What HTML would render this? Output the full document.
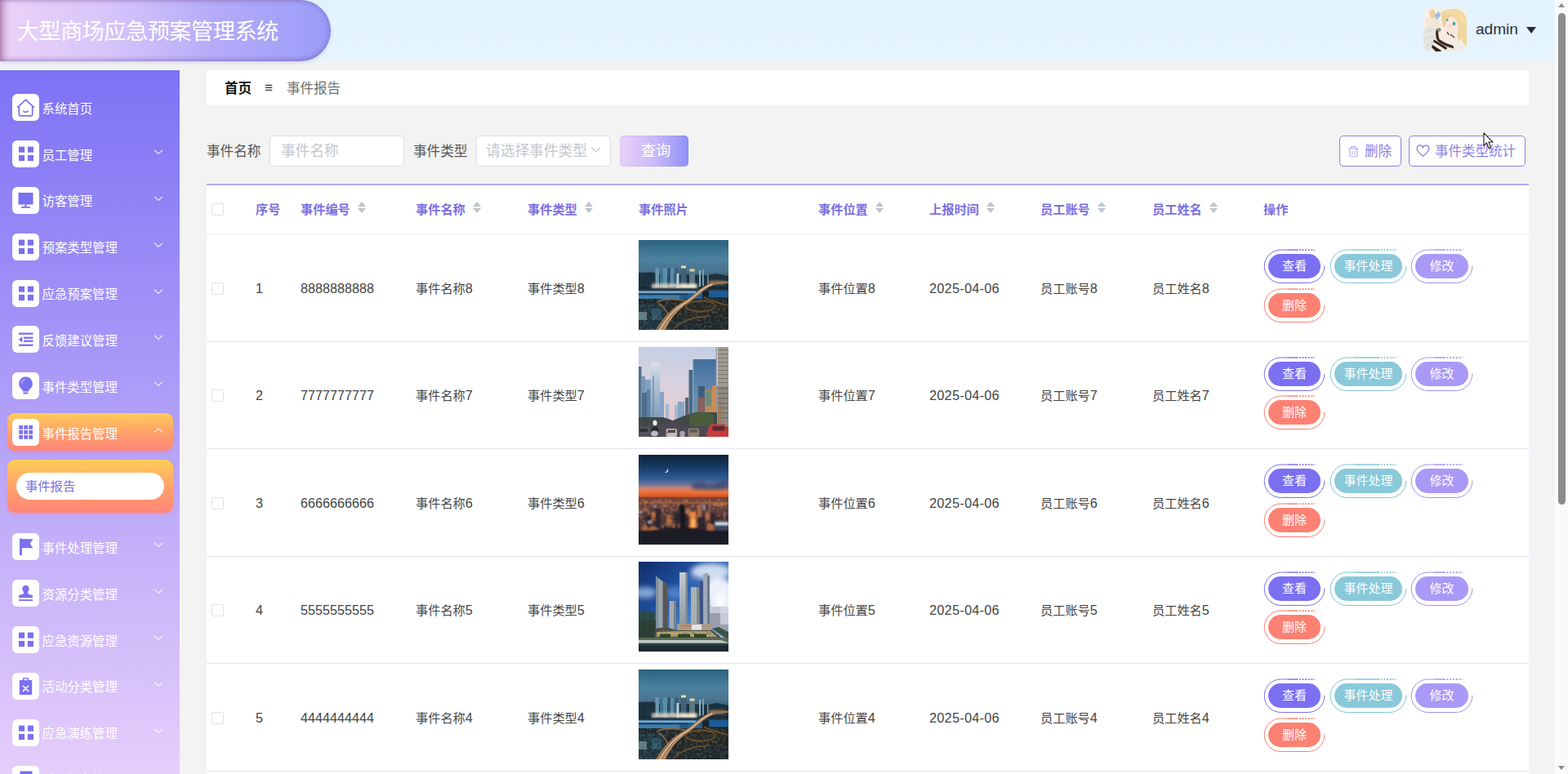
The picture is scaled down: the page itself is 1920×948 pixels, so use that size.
<!DOCTYPE html>
<html lang="zh-CN">
<head>
<meta charset="utf-8">
<title>大型商场应急预案管理系统</title>
<style>
*{box-sizing:border-box;margin:0;padding:0}
html,body{width:1920px;height:948px;overflow:hidden;background:#f3f3f3;font-family:"Liberation Sans","Noto Sans CJK SC",sans-serif;color:#333}
body{position:relative}
.abs{position:absolute}
/* header */
#hdr{position:absolute;left:0;top:0;width:1904px;height:80px;background:linear-gradient(180deg,#e3f3fe 0%,#e5f4fe 86%,#f3f3f3 100%)}
#logo{position:absolute;left:0;top:0;width:405px;height:75px;border-radius:0 40px 40px 0;background:linear-gradient(90deg,#ecd2f8 0%,#d6c5fa 33%,#b4aaf8 66%,#9a9cf8 100%);box-shadow:inset 7px 0 8px -3px rgba(120,60,110,.55),inset 0 -4px 6px -3px rgba(100,80,170,.4),inset 0 3px 5px -3px rgba(120,90,160,.35),inset -4px 0 8px -4px rgba(90,80,180,.4),0 2px 4px rgba(150,150,190,.3);color:#fff;font-size:27.2px;line-height:77px;padding-left:20.5px;white-space:nowrap;letter-spacing:-.5px}
#avatar{position:absolute;left:1743px;top:10px;width:53px;height:53px;border-radius:8px;overflow:hidden}
#uname{position:absolute;left:1807px;top:22px;font-size:19px;line-height:28px;color:#2b3340}
#ucaret{position:absolute;left:1868.5px;top:33px;width:0;height:0;border-left:6px solid transparent;border-right:6px solid transparent;border-top:8px solid #252b33}
/* scrollbar */
#sb{position:absolute;left:1904px;top:0;width:16px;height:948px;background:#fafafa}
#sb .th{position:absolute;left:4px;top:16px;width:9px;height:602px;border-radius:5px;background:#8b8b8d}
#sb .up{position:absolute;left:4px;top:4px;width:0;height:0;border-left:4.5px solid transparent;border-right:4.5px solid transparent;border-bottom:5px solid #8b8b8d}
#sb .dn{position:absolute;left:4px;top:938px;width:0;height:0;border-left:4.5px solid transparent;border-right:4.5px solid transparent;border-top:5px solid #8b8b8d}
/* sidebar */
#side{position:absolute;left:0;top:86px;width:220px;height:862px;background:linear-gradient(180deg,#7d72f5 0%,#e6cefb 100%);overflow:hidden}
.mi{position:absolute;left:0;width:220px;height:46px;color:#fff;font-size:15.4px;line-height:46px;white-space:nowrap}
.mi .ic{position:absolute;left:15px;top:7px;width:33px;height:33px;border-radius:6px;background:#fff}
.mi .ic svg{position:absolute;left:0;top:0;width:33px;height:33px}
.mi .tx{position:absolute;left:51.5px;top:2.5px}
.mi .ar{position:absolute;left:188px;top:15px;width:12px;height:12px}
.mi.act{left:9px;width:203px;border-radius:9px;background:linear-gradient(180deg,#ffcd5a 0%,#ff9f6b 55%,#ff8578 100%);box-shadow:0 2px 5px rgba(255,120,110,.3)}
.mi.act .ic{left:6px}
.mi.act .tx{left:42.5px}
.mi.act .ar{left:179px}
#sub{position:absolute;left:9px;top:477px;width:203px;height:65px;border-radius:9px;background:linear-gradient(180deg,#ffcd5a 0%,#ff9f6b 55%,#ff8578 100%);box-shadow:0 2px 5px rgba(255,120,110,.3)}
#sub .pill{position:absolute;left:11px;top:16px;width:181px;height:33px;border-radius:17px;background:#fff;color:#7a70de;font-size:15.3px;line-height:33px;padding-left:11px}
/* main */
#crumb{position:absolute;left:253px;top:86px;width:1619px;height:43px;background:#fff;font-size:16.5px;line-height:45px}
#crumb b{position:absolute;left:22px;color:#111;font-weight:bold}
#crumb i{position:absolute;left:71px;top:-1px;font-style:normal;color:#333;font-size:17px}
#crumb span{position:absolute;left:98px;color:#707070}
.lbl{position:absolute;top:166px;height:38px;line-height:40px;font-size:16.6px;color:#555}
.inp{position:absolute;top:166px;height:38px;width:165px;border:1px solid #dcdfe6;border-radius:5px;background:#fff;color:#c3c6cd;font-size:17.7px;line-height:37px;white-space:nowrap;overflow:hidden}
#qbtn{position:absolute;left:759px;top:166px;width:84px;height:38px;border-radius:5px;background:linear-gradient(90deg,#e9d1f8 0%,#c9b9fa 50%,#8f91f7 100%);box-shadow:inset 0 0 2px rgba(130,110,200,.3);color:#fff;font-size:18.3px;line-height:38px;text-align:center;padding-left:4px}
.obtn{position:absolute;top:166px;height:38px;border:1px solid #8a81e0;border-radius:5px;background:#fff;color:#8b83e6;font-size:16.5px;line-height:36px;white-space:nowrap}
/* table */
#tbl{position:absolute;left:253px;top:225px;width:1619px;height:723px;background:#fff;border-top:2px solid #b5a9ee;overflow:hidden}
.hr{position:absolute;left:0;top:0;width:1619px;height:60px;border-bottom:1px solid #ebeef5}
.th{position:absolute;top:0;height:59px;line-height:59px;font-size:15.2px;font-weight:bold;color:#7b6fe0;white-space:nowrap}
.srt{display:inline-block;position:relative;width:10px;height:16px;margin-left:9px;vertical-align:middle;top:-3.5px}
.srt:before{content:"";position:absolute;left:0;top:1px;border-left:5px solid transparent;border-right:5px solid transparent;border-bottom:6px solid #c0c4cc}
.srt:after{content:"";position:absolute;left:0;top:9px;border-left:5px solid transparent;border-right:5px solid transparent;border-top:6px solid #c0c4cc}
.row{position:absolute;left:0;width:1619px;height:132px;border-bottom:1px solid #e4e2f3}
.td{position:absolute;top:0;height:131px;line-height:133px;font-size:15.2px;color:#444;white-space:nowrap}
.cb{position:absolute;left:6px;width:15px;height:15px;border:1px solid #dfe2e9;border-radius:2px;background:#fff}
.d{font-size:16.2px}
.num{letter-spacing:0}
.date{letter-spacing:.3px}
.pic{position:absolute;left:529px;top:7px;width:110px;height:110px;overflow:hidden}
.pic svg{display:block;width:110px;height:110px}
.b{position:absolute;height:30px;border-radius:15px;color:#fff;font-size:15px;line-height:30px;text-align:center}
.b span{position:relative}
.b svg{position:absolute;left:-7px;top:-10px;overflow:visible}
</style>
</head>
<body>
<div id="hdr"></div>
<div id="logo">大型商场应急预案管理系统</div>
<div id="avatar"><svg viewBox="0 0 53 53" width="53" height="53"><defs><filter id="bla" x="-10%" y="-10%" width="120%" height="120%"><feGaussianBlur stdDeviation=".7"/></filter></defs>
<rect width="53" height="53" fill="#f5f0e8"/>
<g filter="url(#bla)">
<path d="M7 3 Q11 0 14 3 L15 11 Q11 14 8 11Z" fill="#ecd2a4"/>
<path d="M14 8 L19 4 L21 9 L16 15Z" fill="#9dbfe8"/>
<path d="M2 14 Q10 10 20 16 L22 24 Q12 22 4 24Z" fill="#f3e6d6"/>
<path d="M21 6 Q30 -1 44 2 Q53 6 53 20 V46 Q48 44 46 36 Q48 22 40 12 Q30 8 24 18Z" fill="#efd69c"/>
<path d="M27 3 Q38 0 47 5 Q52 12 52 26 Q46 12 36 9 Q30 8 27 12Z" fill="#f3dca6"/>
<path d="M24 16 Q26 10 34 10 Q43 12 44 24 Q43 32 36 34 Q28 33 25 27Z" fill="#fbe7de"/>
<path d="M22 14 Q26 6 36 8 Q31 10 28 17 Q27 22 25 24Z" fill="#edd296"/>
<path d="M38 10 Q45 14 46 28 Q47 36 44 42 L41 34 Q44 26 42 18Z" fill="#efd49a"/>
<ellipse cx="37.5" cy="19" rx="1.7" ry="2.3" fill="#35a696"/><ellipse cx="29" cy="14.5" rx="1.3" ry="1.8" fill="#5aa8c0"/>
<ellipse cx="33" cy="22" rx="3" ry="2" fill="#f9cfd0" opacity=".7"/>
<path d="M0 26 Q6 20 14 24 L16 40 L8 53 H0Z" fill="#e7e5e1"/>
<path d="M2 30 L12 26 M3 38 L13 34 M4 46 L12 42" stroke="#d2d0cc" stroke-width="1"/>
<path d="M17 30 Q28 26 40 34 L46 44 L44 53 H14 L16 40Z" fill="#f6ebe2"/>
<path d="M15.5 26 Q14 34 17 40 Q24 47 40 50 L43 47.5 Q28 44.5 19.5 38 Q17.5 32 18.5 27Z" fill="#3f2c22"/>
<path d="M16 25 Q20 23 22 26 L20 29 Q18 27 16 28Z" fill="#8a8478"/>
<path d="M11 45 L22 52 L21 53 H15 L10 48Z M13 38.5 L29 48.5 L27.5 51 L12 41Z" fill="#2c2220"/>
<path d="M29 29 L31 33 M33 32 L38 36" stroke="#4a3426" stroke-width="1.2"/>
<path d="M36 44 Q44 40 50 44 L53 53 H38Z" fill="#f1ece8"/>
<path d="M44 30 Q50 36 53 46 V28Z" fill="#efd8a0"/>
</g></svg></div>
<div id="uname">admin</div>
<div id="ucaret"></div>
<div id="side">
<div class="mi" style="top:22.2px"><div class="ic"><svg viewBox="0 0 33 33"><path d="M6.5 16.3 L16.5 7.2 L26.5 16.3 M8.3 14.8 V25.3 Q8.3 26.8 9.8 26.8 H23.2 Q24.7 26.8 24.7 25.3 V14.8" fill="none" stroke="#7b70f0" stroke-width="1.7" stroke-linejoin="round" stroke-linecap="round"/><path d="M13.6 21.2 Q16.5 23.6 19.4 21.2" fill="none" stroke="#7b70f0" stroke-width="1.5" stroke-linecap="round"/></svg></div><div class="tx">系统首页</div></div>
<div class="mi" style="top:79.1px"><div class="ic"><svg viewBox="0 0 33 33"><g fill="#7b70f0"><rect x="8" y="7.6" width="7.1" height="7.1"/><rect x="18.9" y="7.6" width="7.1" height="7.1"/><rect x="8" y="18" width="7.1" height="7.1"/><rect x="18.9" y="18" width="7.1" height="7.1"/></g></svg></div><div class="tx">员工管理</div><svg class="ar" viewBox="0 0 12 12"><path d="M1 3.8 L6 8.5 L11 3.8" fill="none" stroke="#fff" stroke-opacity=".8" stroke-width="1.2"/></svg></div>
<div class="mi" style="top:135.9px"><div class="ic"><svg viewBox="0 0 33 33"><g fill="#7b70f0"><rect x="7.5" y="7" width="18" height="14.5"/><rect x="15.3" y="21.5" width="2.4" height="3"/><rect x="11" y="24" width="11" height="1.8"/></g></svg></div><div class="tx">访客管理</div><svg class="ar" viewBox="0 0 12 12"><path d="M1 3.8 L6 8.5 L11 3.8" fill="none" stroke="#fff" stroke-opacity=".8" stroke-width="1.2"/></svg></div>
<div class="mi" style="top:192.8px"><div class="ic"><svg viewBox="0 0 33 33"><g fill="#7b70f0"><rect x="8" y="7.6" width="7.1" height="7.1"/><rect x="18.9" y="7.6" width="7.1" height="7.1"/><rect x="8" y="18" width="7.1" height="7.1"/><rect x="18.9" y="18" width="7.1" height="7.1"/></g></svg></div><div class="tx">预案类型管理</div><svg class="ar" viewBox="0 0 12 12"><path d="M1 3.8 L6 8.5 L11 3.8" fill="none" stroke="#fff" stroke-opacity=".8" stroke-width="1.2"/></svg></div>
<div class="mi" style="top:249.6px"><div class="ic"><svg viewBox="0 0 33 33"><g fill="#7b70f0"><rect x="8" y="7.6" width="7.1" height="7.1"/><rect x="18.9" y="7.6" width="7.1" height="7.1"/><rect x="8" y="18" width="7.1" height="7.1"/><rect x="18.9" y="18" width="7.1" height="7.1"/></g></svg></div><div class="tx">应急预案管理</div><svg class="ar" viewBox="0 0 12 12"><path d="M1 3.8 L6 8.5 L11 3.8" fill="none" stroke="#fff" stroke-opacity=".8" stroke-width="1.2"/></svg></div>
<div class="mi" style="top:306.4px"><div class="ic"><svg viewBox="0 0 33 33"><g fill="#7b70f0"><rect x="8" y="8.5" width="17.5" height="2.3"/><rect x="14" y="13.6" width="11.5" height="2.3"/><rect x="14" y="17.6" width="11.5" height="2.3"/><rect x="8" y="22.6" width="17.5" height="2.3"/><path d="M12.3 13.2 V20.4 L7.8 16.8 Z"/></g></svg></div><div class="tx">反馈建议管理</div><svg class="ar" viewBox="0 0 12 12"><path d="M1 3.8 L6 8.5 L11 3.8" fill="none" stroke="#fff" stroke-opacity=".8" stroke-width="1.2"/></svg></div>
<div class="mi" style="top:363.3px"><div class="ic"><svg viewBox="0 0 33 33"><g fill="#7b70f0"><path d="M16.5 5.5 a8.3 8.3 0 0 1 5 14.9 q-1.3 1 -1.5 3.1 h-7 q-.2 -2.1 -1.5 -3.1 a8.3 8.3 0 0 1 5 -14.9z"/><rect x="13.3" y="24.6" width="6.4" height="1.9" rx=".9"/></g><path d="M11.8 13.5 a5 5 0 0 1 3.6 -4.6" fill="none" stroke="#b9b2fa" stroke-width="1.3" stroke-linecap="round"/></svg></div><div class="tx">事件类型管理</div><svg class="ar" viewBox="0 0 12 12"><path d="M1 3.8 L6 8.5 L11 3.8" fill="none" stroke="#fff" stroke-opacity=".8" stroke-width="1.2"/></svg></div>
<div class="mi act" style="top:420.1px"><div class="ic"><svg viewBox="0 0 33 33"><g fill="#7b70f0"><rect x="8.2" y="8" width="4.8" height="4.8"/><rect x="14.2" y="8" width="4.8" height="4.8"/><rect x="20.2" y="8" width="4.8" height="4.8"/><rect x="8.2" y="14" width="4.8" height="4.8"/><rect x="14.2" y="14" width="4.8" height="4.8"/><rect x="20.2" y="14" width="4.8" height="4.8"/><rect x="8.2" y="20" width="4.8" height="4.8"/><rect x="14.2" y="20" width="4.8" height="4.8"/><rect x="20.2" y="20" width="4.8" height="4.8"/></g></svg></div><div class="tx">事件报告管理</div><svg class="ar" viewBox="0 0 12 12"><path d="M1 8.5 L6 3.8 L11 8.5" fill="none" stroke="#fff" stroke-opacity=".8" stroke-width="1.2"/></svg></div>
<div class="mi" style="top:560.3px"><div class="ic"><svg viewBox="0 0 33 33"><g fill="#7b70f0"><rect x="9" y="6.5" width="3" height="20.5" rx=".6"/><path d="M12 7.2 H25.5 L21.6 12.7 L25.5 18.3 H12 Z"/></g></svg></div><div class="tx">事件处理管理</div><svg class="ar" viewBox="0 0 12 12"><path d="M1 3.8 L6 8.5 L11 3.8" fill="none" stroke="#fff" stroke-opacity=".8" stroke-width="1.2"/></svg></div>
<div class="mi" style="top:617.1px"><div class="ic"><svg viewBox="0 0 33 33"><g fill="#7b70f0"><path d="M16.5 6.8 a4.3 4.3 0 0 1 3 7.4 q-.9 1 -.3 2.6 q.5 1.4 2.6 1.6 h1.6 q1.6 0 1.6 1.6 v2.2 h-17 v-2.2 q0 -1.6 1.6 -1.6 h1.6 q2.1 -.2 2.6 -1.6 q.6 -1.6 -.3 -2.6 a4.3 4.3 0 0 1 3 -7.4z"/><rect x="8" y="24.2" width="17" height="1.8"/></g></svg></div><div class="tx">资源分类管理</div><svg class="ar" viewBox="0 0 12 12"><path d="M1 3.8 L6 8.5 L11 3.8" fill="none" stroke="#fff" stroke-opacity=".8" stroke-width="1.2"/></svg></div>
<div class="mi" style="top:674px"><div class="ic"><svg viewBox="0 0 33 33"><g fill="#7b70f0"><rect x="8" y="7.6" width="7.1" height="7.1"/><rect x="18.9" y="7.6" width="7.1" height="7.1"/><rect x="8" y="18" width="7.1" height="7.1"/><rect x="18.9" y="18" width="7.1" height="7.1"/></g></svg></div><div class="tx">应急资源管理</div><svg class="ar" viewBox="0 0 12 12"><path d="M1 3.8 L6 8.5 L11 3.8" fill="none" stroke="#fff" stroke-opacity=".8" stroke-width="1.2"/></svg></div>
<div class="mi" style="top:730.8px"><div class="ic"><svg viewBox="0 0 33 33"><g fill="#7b70f0"><rect x="8.8" y="9" width="15.4" height="18" rx="1"/><rect x="12.8" y="6.2" width="7.4" height="4.5" rx=".8"/></g><rect x="14.3" y="7.6" width="4.4" height="1.6" fill="#fff"/><path d="M13.4 16.2 L19.6 22.4 M19.6 16.2 L13.4 22.4" stroke="#fff" stroke-width="1.6" stroke-linecap="round"/></svg></div><div class="tx">活动分类管理</div><svg class="ar" viewBox="0 0 12 12"><path d="M1 3.8 L6 8.5 L11 3.8" fill="none" stroke="#fff" stroke-opacity=".8" stroke-width="1.2"/></svg></div>
<div class="mi" style="top:787.7px"><div class="ic"><svg viewBox="0 0 33 33"><g fill="#7b70f0"><rect x="8" y="7.6" width="7.1" height="7.1"/><rect x="18.9" y="7.6" width="7.1" height="7.1"/><rect x="8" y="18" width="7.1" height="7.1"/><rect x="18.9" y="18" width="7.1" height="7.1"/></g></svg></div><div class="tx">应急演练管理</div><svg class="ar" viewBox="0 0 12 12"><path d="M1 3.8 L6 8.5 L11 3.8" fill="none" stroke="#fff" stroke-opacity=".8" stroke-width="1.2"/></svg></div>
<div class="mi" style="top:844.5px"><div class="ic"><svg viewBox="0 0 33 33"><g fill="#7b70f0"><rect x="9.5" y="6.6" width="15" height="20" rx="1"/></g><path d="M12.5 12 H21.5 M12.5 16 H21.5 M12.5 20 H18" stroke="#fff" stroke-width="1.5"/></svg></div><div class="tx">活动报名管理</div><svg class="ar" viewBox="0 0 12 12"><path d="M1 3.8 L6 8.5 L11 3.8" fill="none" stroke="#fff" stroke-opacity=".8" stroke-width="1.2"/></svg></div>
<div id="sub"><div class="pill">事件报告</div></div>
</div>
<div id="crumb"><b>首页</b><i>≡</i><span>事件报告</span></div>
<div class="lbl" style="left:253px">事件名称</div>
<div class="inp" style="left:330px;padding-left:13px">事件名称</div>
<div class="lbl" style="left:506px">事件类型</div>
<div class="inp" style="left:583px;padding-left:11px">请选择事件类型<svg style="position:absolute;left:139px;top:10px" width="13" height="13" viewBox="0 0 13 13"><path d="M1.5 4 L6.5 9 L11.5 4" fill="none" stroke="#c0c4cc" stroke-width="1.2"/></svg></div>
<div id="qbtn">查询</div>
<div class="obtn" style="left:1640px;width:76px"><svg style="position:absolute;left:9px;top:11px" width="14.5" height="15.4" viewBox="0 0 16 17"><g fill="none" stroke="#b5aef2" stroke-width="1.3"><path d="M1.5 4.5 H14.5 M5 4.5 V2.5 Q5 1.8 5.7 1.8 H10.3 Q11 1.8 11 2.5 V4.5 M3 4.5 V14 Q3 15.2 4.2 15.2 H11.8 Q13 15.2 13 14 V4.5 M6.3 7.5 V12.5 M9.7 7.5 V12.5"/></g></svg><span style="position:absolute;left:30px">删除</span></div>
<div class="obtn" style="left:1725px;width:143px"><svg style="position:absolute;left:8px;top:10px" width="17" height="16" viewBox="0 0 17 16"><path d="M8.5 14.3 C4 10.8 1.2 8.3 1.2 5.3 A3.6 3.6 0 0 1 8.5 4 A3.6 3.6 0 0 1 15.8 5.3 C15.8 8.3 13 10.8 8.5 14.3Z" fill="none" stroke="#8b83e6" stroke-width="1.3" stroke-linejoin="round"/></svg><span style="position:absolute;left:31px">事件类型统计</span></div>
<div id="tbl">
<div class="hr"><div class="cb" style="top:22px"></div><div class="th" style="left:60px">序号</div><div class="th" style="left:115px">事件编号<span class="srt"></span></div><div class="th" style="left:256px">事件名称<span class="srt"></span></div><div class="th" style="left:393px">事件类型<span class="srt"></span></div><div class="th" style="left:529px">事件照片</div><div class="th" style="left:749px">事件位置<span class="srt"></span></div><div class="th" style="left:885px">上报时间<span class="srt"></span></div><div class="th" style="left:1021px">员工账号<span class="srt"></span></div><div class="th" style="left:1158px">员工姓名<span class="srt"></span></div><div class="th" style="left:1294px">操作</div></div>
<div class="row" style="top:59.5px"><div class="cb" style="top:59px"></div><div class="td" style="left:60px"><span class="d">1</span></div><div class="td num" style="left:115px"><span class="d">8888888888</span></div><div class="td" style="left:256px">事件名称<span class="d">8</span></div><div class="td" style="left:393px">事件类型<span class="d">8</span></div><div class="td" style="left:749px">事件位置<span class="d">8</span></div><div class="td date" style="left:885px"><span class="d">2025-04-06</span></div><div class="td" style="left:1021px">员工账号<span class="d">8</span></div><div class="td" style="left:1158px">员工姓名<span class="d">8</span></div><div class="pic"><svg viewBox="0 0 110 110" preserveAspectRatio="none"><defs>
<linearGradient id="p1s" x1="0" y1="0" x2="0" y2="1"><stop offset="0" stop-color="#2b627f"/><stop offset=".5" stop-color="#4c829f"/><stop offset=".8" stop-color="#4a7490"/><stop offset="1" stop-color="#3b6079"/></linearGradient>
<linearGradient id="p1h" x1="0" y1="1" x2="1" y2="0"><stop offset="0" stop-color="#caa27a"/><stop offset=".5" stop-color="#b98a60"/><stop offset="1" stop-color="#e2a868"/></linearGradient>
<filter id="bl1" x="-10%" y="-10%" width="120%" height="120%"><feGaussianBlur stdDeviation=".7"/></filter><filter id="bl2" x="-20%" y="-20%" width="140%" height="140%"><feGaussianBlur stdDeviation="1.8"/></filter>
<filter id="nz1" x="0" y="0" width="100%" height="100%"><feTurbulence type="fractalNoise" baseFrequency=".3 .4" numOctaves="2" seed="7"/><feColorMatrix type="matrix" values="0 0 0 0 .62  0 0 0 0 .45  0 0 0 0 .28  2.4 0 0 0 -1.15"/></filter><filter id="nz1b" x="0" y="0" width="100%" height="100%"><feTurbulence type="fractalNoise" baseFrequency=".18 .25" numOctaves="2" seed="21"/><feColorMatrix type="matrix" values="0 0 0 0 .2  0 0 0 0 .38  0 0 0 0 .48  0 2.4 0 0 -1.2"/></filter></defs>
<rect width="110" height="110" fill="#18232a"/>
<rect width="110" height="46" fill="url(#p1s)"/>
<g filter="url(#bl1)">
<path d="M0 40 L18 39.5 L22 42 L60 42 L84 43 L96 41 L110 44 V58 H0Z" fill="#1c3340"/>
<rect x="20.5" y="34" width="4.5" height="24" fill="#6a96ae"/><rect x="26" y="39" width="3.5" height="19" fill="#3f6f8c"/><rect x="29.5" y="34.5" width="5.5" height="24" fill="#5890ac"/><rect x="35.5" y="34.5" width="3.5" height="23" fill="#2f556e"/><rect x="39" y="35" width="4.5" height="22" fill="#5b8aa4"/><rect x="44" y="34.5" width="5" height="23" fill="#3a5f7a"/><rect x="46.5" y="41" width="3" height="18" fill="#b4cedb"/><rect x="51.5" y="32" width="7" height="26" fill="#3f6278"/><rect x="52" y="31.5" width="6" height="3" fill="#ecd9a8"/><rect x="62" y="36" width="7" height="22" fill="#5a7886"/><rect x="62.5" y="35.5" width="6" height="3" fill="#e6d09a"/><rect x="74" y="37" width="2" height="20" fill="#8fb0c2"/><rect x="78" y="36" width="1.8" height="20" fill="#7fa2b6"/><rect x="84" y="42" width="1.5" height="12" fill="#6f93a8"/>
</g>
<g filter="url(#bl2)"><rect x="16" y="53.5" width="56" height="6" fill="#e9dcc8" opacity=".8"/><rect x="50" y="54" width="20" height="5" fill="#fff0d0" opacity=".9"/><rect x="86" y="50" width="20" height="4" fill="#d89858" opacity=".7"/></g>
<g filter="url(#bl1)">
<rect x="0" y="59.5" width="110" height="3" fill="#223846"/>
<rect x="0" y="62" width="78" height="10" fill="#215f8d"/><rect x="0" y="62.5" width="70" height="2.6" fill="#7aa6c8"/><rect x="0" y="65.5" width="60" height="1.8" fill="#1c3a52"/><rect x="0" y="67.5" width="50" height="4.5" fill="#3a7eae"/>
<rect x="86" y="62" width="24" height="8.5" fill="#1c5b96"/>
<rect x="0" y="72" width="110" height="38" fill="#1b252a"/>
<rect x="38" y="72" width="72" height="24" fill="#25251f" opacity=".8"/>
<rect x="0" y="78" width="30" height="32" fill="#1d3642" opacity=".8"/>
<rect x="0" y="88" width="10" height="10" fill="#6d8894" opacity=".8"/><rect x="16" y="84" width="12" height="14" fill="#2c5468" opacity=".8"/>
</g>
<rect x="0" y="72" width="110" height="38" filter="url(#nz1)" opacity=".3"/>
<rect x="0" y="72" width="110" height="38" filter="url(#nz1b)" opacity=".25"/>
<g filter="url(#bl1)" fill="none" stroke-linecap="round">
<ellipse cx="76" cy="81" rx="18" ry="6.5" stroke="#6e4e2c" stroke-width="1.8"/>
<path d="M23 76 C27 71 50 72 60 75 M25 78 C33 84 38 90 35 100" stroke="#8a6238" stroke-width="1.8"/>
<path d="M42 110 C52 98 66 95 86 93 M80 70 C88 74 98 78 110 80" stroke="#6d5230" stroke-width="1.5"/>
<path d="M21 110 C32 92 42 82 56 75 C68 68 74 58 88 53 C96 51 104 51 110 50.5 V53 C104 53 98 53.5 91 55.5 C78 61 72 70 60 77.5 C47 85 40 95 33 110Z" fill="#9c7452" stroke="none"/>
<path d="M26 110 C36 93 44 84 58 76.5 C70 69 76 59 90 54" stroke="#e6c9a4" stroke-width="1.5" opacity=".9"/>
<path d="M30 110 C38 96 45 88 54 81" stroke="#c89c70" stroke-width="1.5"/>
</g></svg></div><div class="b" style="left:1300px;top:24.5px;width:64px;background:#7b6ff2"><svg width="64" height="30" viewBox="0 0 64 30" style="position:absolute;left:0;top:0;overflow:visible"><path d="M68.8 14.75 A20.25 20.25 0 0 1 48.55 35.5 H15.45 A20.25 20.25 0 0 1 15.45 -5 H34" fill="none" stroke="#7a6fe6" stroke-width="1"/><path d="M23.45 -4.9 H34" stroke="#7a6fe6" stroke-width="1.4" fill="none" opacity=".6"/><path d="M34 -4.8 H57" stroke="#7a6fe6" stroke-width="1.7" stroke-dasharray="1.9 1.8" fill="none"/></svg><span>查看</span></div><div class="b" style="left:1381px;top:24.5px;width:83px;background:#89c9da"><svg width="83" height="30" viewBox="0 0 83 30" style="position:absolute;left:0;top:0;overflow:visible"><path d="M87.8 14.75 A20.25 20.25 0 0 1 67.55 35.5 H15.45 A20.25 20.25 0 0 1 15.45 -5 H53" fill="none" stroke="#7fc4d4" stroke-width="1"/><path d="M23.45 -4.9 H53" stroke="#7fc4d4" stroke-width="1.4" fill="none" opacity=".6"/><path d="M53 -4.8 H76" stroke="#7fc4d4" stroke-width="1.7" stroke-dasharray="1.9 1.8" fill="none"/></svg><span>事件处理</span></div><div class="b" style="left:1480px;top:24.5px;width:65px;background:#aa99f6"><svg width="65" height="30" viewBox="0 0 65 30" style="position:absolute;left:0;top:0;overflow:visible"><path d="M69.8 14.75 A20.25 20.25 0 0 1 49.55 35.5 H15.45 A20.25 20.25 0 0 1 15.45 -5 H35" fill="none" stroke="#a293ee" stroke-width="1"/><path d="M23.45 -4.9 H35" stroke="#a293ee" stroke-width="1.4" fill="none" opacity=".6"/><path d="M35 -4.8 H58" stroke="#a293ee" stroke-width="1.7" stroke-dasharray="1.9 1.8" fill="none"/></svg><span>修改</span></div><div class="b" style="left:1300px;top:72px;width:64px;background:#fc8172"><svg width="64" height="30" viewBox="0 0 64 30" style="position:absolute;left:0;top:0;overflow:visible"><path d="M68.8 14.75 A20.25 20.25 0 0 1 48.55 35.5 H15.45 A20.25 20.25 0 0 1 15.45 -5 H34" fill="none" stroke="#f5806f" stroke-width="1"/><path d="M23.45 -4.9 H34" stroke="#f5806f" stroke-width="1.4" fill="none" opacity=".6"/><path d="M34 -4.8 H57" stroke="#f5806f" stroke-width="1.7" stroke-dasharray="1.9 1.8" fill="none"/></svg><span>删除</span></div></div>
<div class="row" style="top:191px"><div class="cb" style="top:59px"></div><div class="td" style="left:60px"><span class="d">2</span></div><div class="td num" style="left:115px"><span class="d">7777777777</span></div><div class="td" style="left:256px">事件名称<span class="d">7</span></div><div class="td" style="left:393px">事件类型<span class="d">7</span></div><div class="td" style="left:749px">事件位置<span class="d">7</span></div><div class="td date" style="left:885px"><span class="d">2025-04-06</span></div><div class="td" style="left:1021px">员工账号<span class="d">7</span></div><div class="td" style="left:1158px">员工姓名<span class="d">7</span></div><div class="pic"><svg viewBox="0 0 110 110" preserveAspectRatio="none"><defs>
<linearGradient id="p2s" x1="0" y1="0" x2="0" y2="1"><stop offset="0" stop-color="#c2cfe3"/><stop offset=".4" stop-color="#d9d2e0"/><stop offset=".8" stop-color="#e6cace"/><stop offset="1" stop-color="#d8b8b8"/></linearGradient>
<linearGradient id="p2b" x1="0" y1="0" x2="0" y2="1"><stop offset="0" stop-color="#436f9f"/><stop offset=".6" stop-color="#6a8fb0"/><stop offset="1" stop-color="#6f8a8c"/></linearGradient>
<linearGradient id="p2t" x1="0" y1="0" x2="0" y2="1"><stop offset="0" stop-color="#d9dfe8"/><stop offset=".3" stop-color="#b6c6d8"/><stop offset="1" stop-color="#7f9cba"/></linearGradient>
<filter id="bl3" x="-10%" y="-10%" width="120%" height="120%"><feGaussianBlur stdDeviation=".6"/></filter></defs>
<rect width="110" height="110" fill="url(#p2s)"/>
<g filter="url(#bl3)">
<rect x="0" y="24" width="3.5" height="70" fill="#56728f"/><rect x="3" y="36" width="5" height="58" fill="#7796b6"/><rect x="8" y="40" width="7" height="54" fill="#7fa0c2"/><rect x="4" y="56" width="6" height="38" fill="#4d6c8c"/><rect x="10" y="52" width="6" height="42" fill="#5e80a4"/>
<rect x="14.5" y="19" width="11.5" height="70" fill="url(#p2t)"/><rect x="17" y="35" width="2" height="52" fill="#6c8cae" opacity=".7"/>
<rect x="26" y="55" width="5" height="36" fill="#86a3c4"/><rect x="33" y="70" width="4" height="20" fill="#a3b7cf"/><rect x="44" y="71" width="5" height="18" fill="#a5bad0"/><rect x="48" y="67" width="8" height="22" fill="#86a6c4"/>
<rect x="57" y="62" width="4" height="34" fill="#566878"/><rect x="61.5" y="28" width="4.5" height="66" fill="#496987"/>
<rect x="66" y="15" width="29" height="82" fill="url(#p2b)"/><rect x="66" y="15" width="1.2" height="82" fill="#89a9c6"/>
<rect x="73" y="48" width="8" height="32" fill="#3c5c7e"/><rect x="72.5" y="62" width="8" height="20" fill="#8a6060"/>
<rect x="81" y="53" width="9" height="35" fill="#b98c58"/><rect x="82" y="54" width="7" height="18" fill="#6d8a78"/>
<rect x="90" y="47" width="7" height="50" fill="#cf8a55"/>
<rect x="97" y="0" width="13" height="100" fill="#a39c94"/>
<g fill="#6e6a68" opacity=".7"><rect x="97" y="3" width="13" height="1.2"/><rect x="97" y="8" width="13" height="1.2"/><rect x="97" y="13" width="13" height="1.2"/><rect x="97" y="18" width="13" height="1.2"/><rect x="97" y="23" width="13" height="1.2"/><rect x="97" y="28" width="13" height="1.2"/><rect x="97" y="33" width="13" height="1.2"/><rect x="97" y="38" width="13" height="1.2"/><rect x="97" y="43" width="13" height="1.2"/></g>
<rect x="97" y="48" width="13" height="50" fill="#8f8a82"/><g fill="#6a625c" opacity=".7"><rect x="97" y="50" width="13" height="1.5"/><rect x="97" y="56" width="13" height="1.5"/><rect x="97" y="62" width="13" height="1.5"/><rect x="97" y="68" width="13" height="1.5"/><rect x="97" y="74" width="13" height="1.5"/><rect x="97" y="80" width="13" height="1.5"/><rect x="97" y="86" width="13" height="1.5"/></g><rect x="97" y="70" width="5" height="24" fill="#a8744a" opacity=".6"/>
<rect x="94.5" y="0" width="1.3" height="96" fill="#8d9aa6"/>
<path d="M0 86 H30 L42 90 L56 84 L70 80 H96 V104 H0Z" fill="#3f4a46"/><path d="M62 84 Q76 77 92 83 V98 H62Z" fill="#4c5c3a"/>
<path d="M0 96 L30 94 L42 90 L54 96 L110 98 V110 H0Z" fill="#4b4a52"/>
<rect x="0" y="98" width="13" height="12" rx="2" fill="#56545c"/><rect x="1" y="100" width="10" height="4" fill="#2f3038"/>
<ellipse cx="20" cy="93" rx="2.6" ry="3.2" fill="#e9e9ee"/><path d="M15.5 110 V100 Q20 94 24.5 100 V110Z" fill="#2a2a32"/><ellipse cx="19.5" cy="106" rx="4.5" ry="3.5" fill="#b9b9c1"/>
<rect x="33.5" y="100" width="13.5" height="10" rx="2" fill="#c4bcbc"/><rect x="35.5" y="101.5" width="9.5" height="3.6" fill="#4f4a52"/>
<rect x="50.5" y="103" width="6" height="7" rx="1.5" fill="#a8a4ac"/>
<rect x="60.5" y="99.5" width="13.5" height="10.5" rx="2" fill="#8c8172"/><rect x="62.5" y="101" width="9.5" height="3.6" fill="#5a5a52"/>
<path d="M83 110 Q84 96 90 94.5 H104 Q109 96 110 104 V110Z" fill="#c63a3c"/><rect x="90.5" y="97" width="15" height="5.5" rx="1" fill="#5a2a32"/>
<circle cx="45" cy="101" r="1" fill="#ff5a4a"/><circle cx="35" cy="105.5" r="1" fill="#e04a3a"/>
</g></svg></div><div class="b" style="left:1300px;top:24.5px;width:64px;background:#7b6ff2"><svg width="64" height="30" viewBox="0 0 64 30" style="position:absolute;left:0;top:0;overflow:visible"><path d="M68.8 14.75 A20.25 20.25 0 0 1 48.55 35.5 H15.45 A20.25 20.25 0 0 1 15.45 -5 H34" fill="none" stroke="#7a6fe6" stroke-width="1"/><path d="M23.45 -4.9 H34" stroke="#7a6fe6" stroke-width="1.4" fill="none" opacity=".6"/><path d="M34 -4.8 H57" stroke="#7a6fe6" stroke-width="1.7" stroke-dasharray="1.9 1.8" fill="none"/></svg><span>查看</span></div><div class="b" style="left:1381px;top:24.5px;width:83px;background:#89c9da"><svg width="83" height="30" viewBox="0 0 83 30" style="position:absolute;left:0;top:0;overflow:visible"><path d="M87.8 14.75 A20.25 20.25 0 0 1 67.55 35.5 H15.45 A20.25 20.25 0 0 1 15.45 -5 H53" fill="none" stroke="#7fc4d4" stroke-width="1"/><path d="M23.45 -4.9 H53" stroke="#7fc4d4" stroke-width="1.4" fill="none" opacity=".6"/><path d="M53 -4.8 H76" stroke="#7fc4d4" stroke-width="1.7" stroke-dasharray="1.9 1.8" fill="none"/></svg><span>事件处理</span></div><div class="b" style="left:1480px;top:24.5px;width:65px;background:#aa99f6"><svg width="65" height="30" viewBox="0 0 65 30" style="position:absolute;left:0;top:0;overflow:visible"><path d="M69.8 14.75 A20.25 20.25 0 0 1 49.55 35.5 H15.45 A20.25 20.25 0 0 1 15.45 -5 H35" fill="none" stroke="#a293ee" stroke-width="1"/><path d="M23.45 -4.9 H35" stroke="#a293ee" stroke-width="1.4" fill="none" opacity=".6"/><path d="M35 -4.8 H58" stroke="#a293ee" stroke-width="1.7" stroke-dasharray="1.9 1.8" fill="none"/></svg><span>修改</span></div><div class="b" style="left:1300px;top:72px;width:64px;background:#fc8172"><svg width="64" height="30" viewBox="0 0 64 30" style="position:absolute;left:0;top:0;overflow:visible"><path d="M68.8 14.75 A20.25 20.25 0 0 1 48.55 35.5 H15.45 A20.25 20.25 0 0 1 15.45 -5 H34" fill="none" stroke="#f5806f" stroke-width="1"/><path d="M23.45 -4.9 H34" stroke="#f5806f" stroke-width="1.4" fill="none" opacity=".6"/><path d="M34 -4.8 H57" stroke="#f5806f" stroke-width="1.7" stroke-dasharray="1.9 1.8" fill="none"/></svg><span>删除</span></div></div>
<div class="row" style="top:322.5px"><div class="cb" style="top:59px"></div><div class="td" style="left:60px"><span class="d">3</span></div><div class="td num" style="left:115px"><span class="d">6666666666</span></div><div class="td" style="left:256px">事件名称<span class="d">6</span></div><div class="td" style="left:393px">事件类型<span class="d">6</span></div><div class="td" style="left:749px">事件位置<span class="d">6</span></div><div class="td date" style="left:885px"><span class="d">2025-04-06</span></div><div class="td" style="left:1021px">员工账号<span class="d">6</span></div><div class="td" style="left:1158px">员工姓名<span class="d">6</span></div><div class="pic"><svg viewBox="0 0 110 110" preserveAspectRatio="none"><defs>
<linearGradient id="p3s" x1="0" y1="0" x2="0" y2="1"><stop offset="0" stop-color="#0f2239"/><stop offset=".3" stop-color="#173c66"/><stop offset=".55" stop-color="#2f5c94"/><stop offset=".68" stop-color="#6b74a0"/><stop offset=".77" stop-color="#c98274"/><stop offset=".86" stop-color="#f0743a"/><stop offset=".95" stop-color="#dc5828"/><stop offset="1" stop-color="#9a4226"/></linearGradient>
<linearGradient id="p3c" x1="0" y1="0" x2="0" y2="1"><stop offset="0" stop-color="#7a4434"/><stop offset=".3" stop-color="#5a3c3c"/><stop offset="1" stop-color="#4a3030"/></linearGradient>
<filter id="bl4" x="-10%" y="-10%" width="120%" height="120%"><feGaussianBlur stdDeviation=".8"/></filter><filter id="nz3" x="0" y="0" width="100%" height="100%"><feTurbulence type="fractalNoise" baseFrequency=".28 .2" numOctaves="2" seed="11"/><feColorMatrix type="matrix" values="0 0 0 0 .95  0 0 0 0 .55  0 0 0 0 .25  2.6 0 0 0 -1.2"/></filter><filter id="bl5" x="-20%" y="-20%" width="140%" height="140%"><feGaussianBlur stdDeviation="2"/></filter></defs>
<rect width="110" height="110" fill="#1b1d28"/>
<rect width="110" height="53" fill="url(#p3s)"/>
<g filter="url(#bl5)"><path d="M64 36 Q76 30 84 36 Q96 36 110 28 V42 Q92 44 66 42Z" fill="#3a4a70" opacity=".85"/></g>
<rect x="0" y="52" width="110" height="42" fill="url(#p3c)"/>
<rect x="0" y="54" width="110" height="38" filter="url(#nz3)" opacity=".36"/>
<g filter="url(#bl4)">
<g fill="#e88a48" opacity=".62"><rect x="0" y="58" width="110" height="1.6"/><rect x="4" y="66" width="8" height="3"/><rect x="16" y="70" width="5" height="10"/><rect x="28" y="62" width="10" height="2"/><rect x="34" y="74" width="6" height="12"/><rect x="42" y="84" width="8" height="6"/><rect x="58" y="66" width="6" height="10"/><rect x="72" y="62" width="4" height="14"/><rect x="82" y="70" width="5" height="10"/><rect x="90" y="60" width="18" height="2.5"/><rect x="4" y="88" width="20" height="4"/><rect x="84" y="84" width="8" height="9"/></g>
<path d="M63.5 70 L70 70 L71 91 L62 91Z" fill="#f08a3a"/><rect x="65" y="76" width="4" height="15" fill="#ffb060"/>
<g fill="#262230" opacity=".85"><rect x="20" y="66" width="7" height="24"/><rect x="44" y="70" width="5" height="20"/><rect x="73" y="76" width="9" height="16"/><rect x="10" y="74" width="5" height="16"/><rect x="56" y="72" width="5" height="18"/><rect x="88" y="72" width="6" height="14"/></g>
<g fill="#c8d8f0" opacity=".8"><rect x="19" y="62" width="3" height="2"/><rect x="0" y="69" width="4" height="2.5"/><rect x="12" y="81" width="3" height="3"/><rect x="79" y="61" width="2" height="6"/></g>
<rect x="93" y="82" width="17" height="10" fill="#3c4a60"/><rect x="94" y="82.5" width="16" height="3.5" fill="#cfe6f4"/>
<path d="M50.5 61.5 Q53 57.5 55.5 61.5 L57 72 L56 90 H50 L49.5 72Z" fill="#15151f"/>
<rect x="0" y="77" width="110" height=".8" fill="#1a1a24" opacity=".7"/>
<path d="M0 93 L30 91 L32 89 H72 L74 92 L110 93 V110 H0Z" fill="#1b1d28"/>
</g>
<path d="M35.3 17.2 a3.4 3.4 0 0 1 -3 4.2 a2.6 2.6 0 0 0 3 -4.2z" fill="#eef2fa" stroke="#eef2fa" stroke-width=".3"/>
</svg></div><div class="b" style="left:1300px;top:24.5px;width:64px;background:#7b6ff2"><svg width="64" height="30" viewBox="0 0 64 30" style="position:absolute;left:0;top:0;overflow:visible"><path d="M68.8 14.75 A20.25 20.25 0 0 1 48.55 35.5 H15.45 A20.25 20.25 0 0 1 15.45 -5 H34" fill="none" stroke="#7a6fe6" stroke-width="1"/><path d="M23.45 -4.9 H34" stroke="#7a6fe6" stroke-width="1.4" fill="none" opacity=".6"/><path d="M34 -4.8 H57" stroke="#7a6fe6" stroke-width="1.7" stroke-dasharray="1.9 1.8" fill="none"/></svg><span>查看</span></div><div class="b" style="left:1381px;top:24.5px;width:83px;background:#89c9da"><svg width="83" height="30" viewBox="0 0 83 30" style="position:absolute;left:0;top:0;overflow:visible"><path d="M87.8 14.75 A20.25 20.25 0 0 1 67.55 35.5 H15.45 A20.25 20.25 0 0 1 15.45 -5 H53" fill="none" stroke="#7fc4d4" stroke-width="1"/><path d="M23.45 -4.9 H53" stroke="#7fc4d4" stroke-width="1.4" fill="none" opacity=".6"/><path d="M53 -4.8 H76" stroke="#7fc4d4" stroke-width="1.7" stroke-dasharray="1.9 1.8" fill="none"/></svg><span>事件处理</span></div><div class="b" style="left:1480px;top:24.5px;width:65px;background:#aa99f6"><svg width="65" height="30" viewBox="0 0 65 30" style="position:absolute;left:0;top:0;overflow:visible"><path d="M69.8 14.75 A20.25 20.25 0 0 1 49.55 35.5 H15.45 A20.25 20.25 0 0 1 15.45 -5 H35" fill="none" stroke="#a293ee" stroke-width="1"/><path d="M23.45 -4.9 H35" stroke="#a293ee" stroke-width="1.4" fill="none" opacity=".6"/><path d="M35 -4.8 H58" stroke="#a293ee" stroke-width="1.7" stroke-dasharray="1.9 1.8" fill="none"/></svg><span>修改</span></div><div class="b" style="left:1300px;top:72px;width:64px;background:#fc8172"><svg width="64" height="30" viewBox="0 0 64 30" style="position:absolute;left:0;top:0;overflow:visible"><path d="M68.8 14.75 A20.25 20.25 0 0 1 48.55 35.5 H15.45 A20.25 20.25 0 0 1 15.45 -5 H34" fill="none" stroke="#f5806f" stroke-width="1"/><path d="M23.45 -4.9 H34" stroke="#f5806f" stroke-width="1.4" fill="none" opacity=".6"/><path d="M34 -4.8 H57" stroke="#f5806f" stroke-width="1.7" stroke-dasharray="1.9 1.8" fill="none"/></svg><span>删除</span></div></div>
<div class="row" style="top:454px"><div class="cb" style="top:59px"></div><div class="td" style="left:60px"><span class="d">4</span></div><div class="td num" style="left:115px"><span class="d">5555555555</span></div><div class="td" style="left:256px">事件名称<span class="d">5</span></div><div class="td" style="left:393px">事件类型<span class="d">5</span></div><div class="td" style="left:749px">事件位置<span class="d">5</span></div><div class="td date" style="left:885px"><span class="d">2025-04-06</span></div><div class="td" style="left:1021px">员工账号<span class="d">5</span></div><div class="td" style="left:1158px">员工姓名<span class="d">5</span></div><div class="pic"><svg viewBox="0 0 110 110" preserveAspectRatio="none"><defs>
<linearGradient id="p4s" x1="0" y1="0" x2="1" y2="1"><stop offset="0" stop-color="#0f2c66"/><stop offset=".35" stop-color="#2050a0"/><stop offset=".6" stop-color="#4a80c8"/><stop offset="1" stop-color="#9fc0e6"/></linearGradient>
<radialGradient id="p4g" cx=".5" cy=".5" r=".5"><stop offset="0" stop-color="#ffffff"/><stop offset=".5" stop-color="#f2f6fc" stop-opacity=".9"/><stop offset="1" stop-color="#dfe9f7" stop-opacity="0"/></radialGradient>
<linearGradient id="p4t" x1="0" y1="0" x2="0" y2="1"><stop offset="0" stop-color="#c4ccd6"/><stop offset="1" stop-color="#8e9aa4"/></linearGradient>
<filter id="bl6" x="-10%" y="-10%" width="120%" height="120%"><feGaussianBlur stdDeviation=".6"/></filter><filter id="nz4" x="0" y="0" width="100%" height="100%"><feTurbulence type="fractalNoise" baseFrequency=".35 .3" numOctaves="2" seed="5"/><feColorMatrix type="matrix" values="0 0 0 0 .12  0 0 0 0 .16  0 0 0 0 .12  2.8 0 0 0 -1.25"/></filter><filter id="bl7" x="-30%" y="-30%" width="160%" height="160%"><feGaussianBlur stdDeviation="3"/></filter></defs>
<rect width="110" height="110" fill="url(#p4s)"/>
<g filter="url(#bl7)"><ellipse cx="88" cy="12" rx="24" ry="10" fill="#dfe8f6" opacity=".9"/><ellipse cx="98" cy="34" rx="18" ry="14" fill="#edf2fa"/><ellipse cx="8" cy="38" rx="14" ry="7" fill="#8fb0de" opacity=".9"/><ellipse cx="44" cy="38" rx="12" ry="8" fill="#5f8fd0" opacity=".7"/><ellipse cx="62" cy="22" rx="8" ry="6" fill="#3f74c0" opacity=".6"/></g>
<ellipse cx="100" cy="50" rx="22" ry="24" fill="url(#p4g)"/>
<g filter="url(#bl6)">
<path d="M0 62 Q10 58 20 62 V84 H0Z" fill="#2c4a44"/><rect x="0" y="72" width="22" height="24" fill="#2a4034"/>
<rect x="87" y="55" width="22" height="28" fill="#9a9eac"/><rect x="87" y="55" width="22" height="8" fill="#c4c9d6"/><rect x="100" y="55" width="10" height="22" fill="#d9dde8" opacity=".7"/>
<path d="M21 17 L24 20 V82 H21Z" fill="#7d8ea0"/><path d="M24 20 L35 28 V82 H24Z" fill="#98a4ae"/><path d="M29.5 24 L35 28 V80 H29.5Z" fill="#595654"/>
<rect x="37.5" y="48" width="8.5" height="36" fill="#a2aab2"/><rect x="43" y="48" width="3" height="36" fill="#7a828c"/>
<rect x="50" y="13" width="10" height="63" fill="url(#p4t)"/><rect x="57.5" y="13" width="2.5" height="63" fill="#7a8690"/>
<rect x="64" y="31" width="10" height="46" fill="#a9b1b3"/><rect x="71" y="31" width="3" height="46" fill="#828a8a"/>
<rect x="75" y="24" width="4" height="54" fill="#3c5384"/><path d="M79 16 L83 13 L87 17 V80 H79Z" fill="#9eaaba"/><rect x="84" y="17" width="3" height="63" fill="#6e7a8c"/>
<path d="M20 82 L34 80 L46 84 H90 L100 92 V98 H18Z" fill="#4a4a3c"/>
<path d="M22 86 L46 85 H88 L96 92 H22Z" fill="#b9a676"/>
<rect x="20" y="82" width="78" height="15" filter="url(#nz4)" opacity=".8"/>
<rect x="47" y="76" width="42" height="8" fill="#a89c88"/><rect x="65" y="77" width="12" height="6.5" fill="#dfe6ee"/><rect x="52" y="77.5" width="12" height="2" fill="#c87850"/>
<g fill="#2f4428"><rect x="26" y="88.5" width="13" height="4.5"/><rect x="48" y="88.5" width="15" height="4.5"/><rect x="68" y="88.5" width="15" height="4.5"/></g>
<path d="M90 82 L110 96 V86 L98 80Z" fill="#3a5244"/>
<rect x="0" y="93" width="110" height="7" fill="#5c6a58"/><path d="M0 96 H100 L110 99 V102 H0Z" fill="#c3ccc8"/>
<rect x="0" y="100" width="110" height="10" fill="#1c2c30"/><rect x="0" y="99.5" width="110" height="3" fill="#3a4c44" opacity=".8"/>
</g></svg></div><div class="b" style="left:1300px;top:24.5px;width:64px;background:#7b6ff2"><svg width="64" height="30" viewBox="0 0 64 30" style="position:absolute;left:0;top:0;overflow:visible"><path d="M68.8 14.75 A20.25 20.25 0 0 1 48.55 35.5 H15.45 A20.25 20.25 0 0 1 15.45 -5 H34" fill="none" stroke="#7a6fe6" stroke-width="1"/><path d="M23.45 -4.9 H34" stroke="#7a6fe6" stroke-width="1.4" fill="none" opacity=".6"/><path d="M34 -4.8 H57" stroke="#7a6fe6" stroke-width="1.7" stroke-dasharray="1.9 1.8" fill="none"/></svg><span>查看</span></div><div class="b" style="left:1381px;top:24.5px;width:83px;background:#89c9da"><svg width="83" height="30" viewBox="0 0 83 30" style="position:absolute;left:0;top:0;overflow:visible"><path d="M87.8 14.75 A20.25 20.25 0 0 1 67.55 35.5 H15.45 A20.25 20.25 0 0 1 15.45 -5 H53" fill="none" stroke="#7fc4d4" stroke-width="1"/><path d="M23.45 -4.9 H53" stroke="#7fc4d4" stroke-width="1.4" fill="none" opacity=".6"/><path d="M53 -4.8 H76" stroke="#7fc4d4" stroke-width="1.7" stroke-dasharray="1.9 1.8" fill="none"/></svg><span>事件处理</span></div><div class="b" style="left:1480px;top:24.5px;width:65px;background:#aa99f6"><svg width="65" height="30" viewBox="0 0 65 30" style="position:absolute;left:0;top:0;overflow:visible"><path d="M69.8 14.75 A20.25 20.25 0 0 1 49.55 35.5 H15.45 A20.25 20.25 0 0 1 15.45 -5 H35" fill="none" stroke="#a293ee" stroke-width="1"/><path d="M23.45 -4.9 H35" stroke="#a293ee" stroke-width="1.4" fill="none" opacity=".6"/><path d="M35 -4.8 H58" stroke="#a293ee" stroke-width="1.7" stroke-dasharray="1.9 1.8" fill="none"/></svg><span>修改</span></div><div class="b" style="left:1300px;top:72px;width:64px;background:#fc8172"><svg width="64" height="30" viewBox="0 0 64 30" style="position:absolute;left:0;top:0;overflow:visible"><path d="M68.8 14.75 A20.25 20.25 0 0 1 48.55 35.5 H15.45 A20.25 20.25 0 0 1 15.45 -5 H34" fill="none" stroke="#f5806f" stroke-width="1"/><path d="M23.45 -4.9 H34" stroke="#f5806f" stroke-width="1.4" fill="none" opacity=".6"/><path d="M34 -4.8 H57" stroke="#f5806f" stroke-width="1.7" stroke-dasharray="1.9 1.8" fill="none"/></svg><span>删除</span></div></div>
<div class="row" style="top:585.5px"><div class="cb" style="top:59px"></div><div class="td" style="left:60px"><span class="d">5</span></div><div class="td num" style="left:115px"><span class="d">4444444444</span></div><div class="td" style="left:256px">事件名称<span class="d">4</span></div><div class="td" style="left:393px">事件类型<span class="d">4</span></div><div class="td" style="left:749px">事件位置<span class="d">4</span></div><div class="td date" style="left:885px"><span class="d">2025-04-06</span></div><div class="td" style="left:1021px">员工账号<span class="d">4</span></div><div class="td" style="left:1158px">员工姓名<span class="d">4</span></div><div class="pic"><svg viewBox="0 0 110 110" preserveAspectRatio="none"><defs>
<linearGradient id="p1s" x1="0" y1="0" x2="0" y2="1"><stop offset="0" stop-color="#2b627f"/><stop offset=".5" stop-color="#4c829f"/><stop offset=".8" stop-color="#4a7490"/><stop offset="1" stop-color="#3b6079"/></linearGradient>
<linearGradient id="p1h" x1="0" y1="1" x2="1" y2="0"><stop offset="0" stop-color="#caa27a"/><stop offset=".5" stop-color="#b98a60"/><stop offset="1" stop-color="#e2a868"/></linearGradient>
<filter id="bl1" x="-10%" y="-10%" width="120%" height="120%"><feGaussianBlur stdDeviation=".7"/></filter><filter id="bl2" x="-20%" y="-20%" width="140%" height="140%"><feGaussianBlur stdDeviation="1.8"/></filter>
<filter id="nz1" x="0" y="0" width="100%" height="100%"><feTurbulence type="fractalNoise" baseFrequency=".3 .4" numOctaves="2" seed="7"/><feColorMatrix type="matrix" values="0 0 0 0 .62  0 0 0 0 .45  0 0 0 0 .28  2.4 0 0 0 -1.15"/></filter><filter id="nz1b" x="0" y="0" width="100%" height="100%"><feTurbulence type="fractalNoise" baseFrequency=".18 .25" numOctaves="2" seed="21"/><feColorMatrix type="matrix" values="0 0 0 0 .2  0 0 0 0 .38  0 0 0 0 .48  0 2.4 0 0 -1.2"/></filter></defs>
<rect width="110" height="110" fill="#18232a"/>
<rect width="110" height="46" fill="url(#p1s)"/>
<g filter="url(#bl1)">
<path d="M0 40 L18 39.5 L22 42 L60 42 L84 43 L96 41 L110 44 V58 H0Z" fill="#1c3340"/>
<rect x="20.5" y="34" width="4.5" height="24" fill="#6a96ae"/><rect x="26" y="39" width="3.5" height="19" fill="#3f6f8c"/><rect x="29.5" y="34.5" width="5.5" height="24" fill="#5890ac"/><rect x="35.5" y="34.5" width="3.5" height="23" fill="#2f556e"/><rect x="39" y="35" width="4.5" height="22" fill="#5b8aa4"/><rect x="44" y="34.5" width="5" height="23" fill="#3a5f7a"/><rect x="46.5" y="41" width="3" height="18" fill="#b4cedb"/><rect x="51.5" y="32" width="7" height="26" fill="#3f6278"/><rect x="52" y="31.5" width="6" height="3" fill="#ecd9a8"/><rect x="62" y="36" width="7" height="22" fill="#5a7886"/><rect x="62.5" y="35.5" width="6" height="3" fill="#e6d09a"/><rect x="74" y="37" width="2" height="20" fill="#8fb0c2"/><rect x="78" y="36" width="1.8" height="20" fill="#7fa2b6"/><rect x="84" y="42" width="1.5" height="12" fill="#6f93a8"/>
</g>
<g filter="url(#bl2)"><rect x="16" y="53.5" width="56" height="6" fill="#e9dcc8" opacity=".8"/><rect x="50" y="54" width="20" height="5" fill="#fff0d0" opacity=".9"/><rect x="86" y="50" width="20" height="4" fill="#d89858" opacity=".7"/></g>
<g filter="url(#bl1)">
<rect x="0" y="59.5" width="110" height="3" fill="#223846"/>
<rect x="0" y="62" width="78" height="10" fill="#215f8d"/><rect x="0" y="62.5" width="70" height="2.6" fill="#7aa6c8"/><rect x="0" y="65.5" width="60" height="1.8" fill="#1c3a52"/><rect x="0" y="67.5" width="50" height="4.5" fill="#3a7eae"/>
<rect x="86" y="62" width="24" height="8.5" fill="#1c5b96"/>
<rect x="0" y="72" width="110" height="38" fill="#1b252a"/>
<rect x="38" y="72" width="72" height="24" fill="#25251f" opacity=".8"/>
<rect x="0" y="78" width="30" height="32" fill="#1d3642" opacity=".8"/>
<rect x="0" y="88" width="10" height="10" fill="#6d8894" opacity=".8"/><rect x="16" y="84" width="12" height="14" fill="#2c5468" opacity=".8"/>
</g>
<rect x="0" y="72" width="110" height="38" filter="url(#nz1)" opacity=".3"/>
<rect x="0" y="72" width="110" height="38" filter="url(#nz1b)" opacity=".25"/>
<g filter="url(#bl1)" fill="none" stroke-linecap="round">
<ellipse cx="76" cy="81" rx="18" ry="6.5" stroke="#6e4e2c" stroke-width="1.8"/>
<path d="M23 76 C27 71 50 72 60 75 M25 78 C33 84 38 90 35 100" stroke="#8a6238" stroke-width="1.8"/>
<path d="M42 110 C52 98 66 95 86 93 M80 70 C88 74 98 78 110 80" stroke="#6d5230" stroke-width="1.5"/>
<path d="M21 110 C32 92 42 82 56 75 C68 68 74 58 88 53 C96 51 104 51 110 50.5 V53 C104 53 98 53.5 91 55.5 C78 61 72 70 60 77.5 C47 85 40 95 33 110Z" fill="#9c7452" stroke="none"/>
<path d="M26 110 C36 93 44 84 58 76.5 C70 69 76 59 90 54" stroke="#e6c9a4" stroke-width="1.5" opacity=".9"/>
<path d="M30 110 C38 96 45 88 54 81" stroke="#c89c70" stroke-width="1.5"/>
</g></svg></div><div class="b" style="left:1300px;top:24.5px;width:64px;background:#7b6ff2"><svg width="64" height="30" viewBox="0 0 64 30" style="position:absolute;left:0;top:0;overflow:visible"><path d="M68.8 14.75 A20.25 20.25 0 0 1 48.55 35.5 H15.45 A20.25 20.25 0 0 1 15.45 -5 H34" fill="none" stroke="#7a6fe6" stroke-width="1"/><path d="M23.45 -4.9 H34" stroke="#7a6fe6" stroke-width="1.4" fill="none" opacity=".6"/><path d="M34 -4.8 H57" stroke="#7a6fe6" stroke-width="1.7" stroke-dasharray="1.9 1.8" fill="none"/></svg><span>查看</span></div><div class="b" style="left:1381px;top:24.5px;width:83px;background:#89c9da"><svg width="83" height="30" viewBox="0 0 83 30" style="position:absolute;left:0;top:0;overflow:visible"><path d="M87.8 14.75 A20.25 20.25 0 0 1 67.55 35.5 H15.45 A20.25 20.25 0 0 1 15.45 -5 H53" fill="none" stroke="#7fc4d4" stroke-width="1"/><path d="M23.45 -4.9 H53" stroke="#7fc4d4" stroke-width="1.4" fill="none" opacity=".6"/><path d="M53 -4.8 H76" stroke="#7fc4d4" stroke-width="1.7" stroke-dasharray="1.9 1.8" fill="none"/></svg><span>事件处理</span></div><div class="b" style="left:1480px;top:24.5px;width:65px;background:#aa99f6"><svg width="65" height="30" viewBox="0 0 65 30" style="position:absolute;left:0;top:0;overflow:visible"><path d="M69.8 14.75 A20.25 20.25 0 0 1 49.55 35.5 H15.45 A20.25 20.25 0 0 1 15.45 -5 H35" fill="none" stroke="#a293ee" stroke-width="1"/><path d="M23.45 -4.9 H35" stroke="#a293ee" stroke-width="1.4" fill="none" opacity=".6"/><path d="M35 -4.8 H58" stroke="#a293ee" stroke-width="1.7" stroke-dasharray="1.9 1.8" fill="none"/></svg><span>修改</span></div><div class="b" style="left:1300px;top:72px;width:64px;background:#fc8172"><svg width="64" height="30" viewBox="0 0 64 30" style="position:absolute;left:0;top:0;overflow:visible"><path d="M68.8 14.75 A20.25 20.25 0 0 1 48.55 35.5 H15.45 A20.25 20.25 0 0 1 15.45 -5 H34" fill="none" stroke="#f5806f" stroke-width="1"/><path d="M23.45 -4.9 H34" stroke="#f5806f" stroke-width="1.4" fill="none" opacity=".6"/><path d="M34 -4.8 H57" stroke="#f5806f" stroke-width="1.7" stroke-dasharray="1.9 1.8" fill="none"/></svg><span>删除</span></div></div>
</div>
<svg id="cursor" style="position:absolute;left:1816.3px;top:162.3px" width="13.8" height="21.6" viewBox="0 0 16 25"><path d="M1 1 V19 L5.2 15 L8 22.5 L11 21.3 L8 14 H14Z" fill="#fff" stroke="#111" stroke-width="1.2" stroke-linejoin="round"/></svg>
<div id="sb"><div class="up"></div><div class="th"></div><div class="dn"></div></div>
</body>
</html>
